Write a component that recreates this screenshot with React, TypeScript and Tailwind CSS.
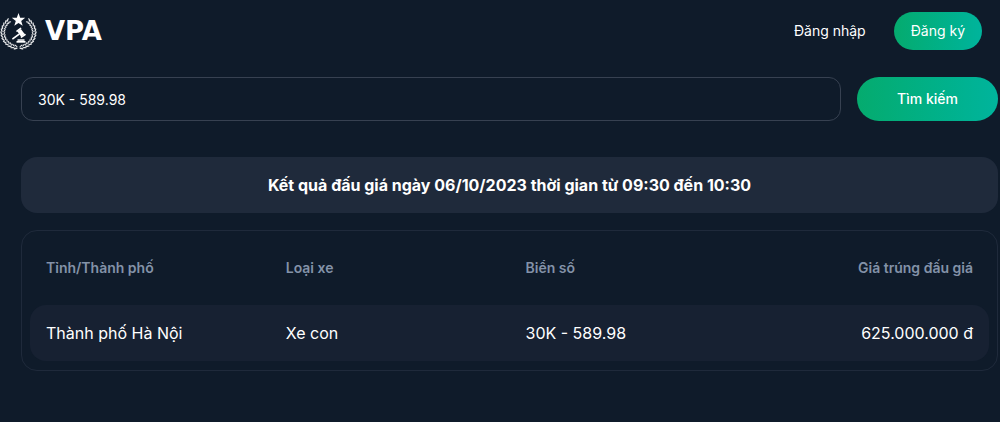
const leafAngles = [100, 111, 122, 133, 144, 155, 166, 177, 188, 199, 210, 221, 230];

function Wreath() {
  return (
    <g>
      {leafAngles.map((angle) => {
        const rad = (angle * Math.PI) / 180;
        const cos = Math.cos(rad);
        const sin = Math.sin(rad);
        return (
          <g key={angle}>
            <ellipse
              rx="2.2"
              ry="0.7"
              transform={`translate(${18.5 + 17 * cos} ${19.5 + 16.2 * sin}) rotate(${angle + 65})`}
            />
            <ellipse
              rx="1.9"
              ry="0.6"
              transform={`translate(${18.5 + 14.2 * cos} ${19.5 + 13.6 * sin}) rotate(${angle + 118})`}
            />
          </g>
        );
      })}
    </g>
  );
}

function Emblem() {
  return (
    <svg viewBox="0 0 37 37" className="size-[37px] shrink-0" fill="currentColor" aria-hidden="true">
      <path d="M18.500 0l1.700 4.800h5l-4 3.100 1.500 4.900-4.200-2.900-4.200 2.900 1.500-4.900-4-3.100h5z" />
      <g opacity="0.9">
        <Wreath />
        <g transform="translate(37 0) scale(-1 1)">
          <Wreath />
        </g>
      </g>
      <g transform="translate(21 19.800) rotate(-36)">
        <rect x="-2.200" y="-3.200" width="4.400" height="6.400" />
        <rect x="-2.900" y="-4.600" width="5.800" height="1.700" rx="0.6" />
        <rect x="-2.900" y="2.900" width="5.800" height="1.700" rx="0.6" />
        <rect x="-10.800" y="-0.900" width="9" height="1.800" rx="0.9" />
      </g>
      <rect x="17.500" y="26.300" width="7" height="1.500" />
      <rect x="16.500" y="28" width="9" height="1.700" />
    </svg>
  );
}

const columns = ["Tỉnh/Thành phố", "Loại xe", "Biển số", "Giá trúng đấu giá"];
const results = [["Thành phố Hà Nội", "Xe con", "30K - 589.98", "625.000.000 đ"]];

export default function App() {
  return (
    <div className="min-h-screen bg-[#0f1b2a] font-['Inter',sans-serif] text-white">
      <header className="flex items-center justify-between pt-3 pr-[18px]">
        <a href="#" className="flex items-center gap-2">
          <Emblem />
          <span className="font-['DejaVu_Sans',sans-serif] text-[26px] leading-none font-bold">VPA</span>
        </a>
        <nav className="flex items-center gap-7 text-sm">
          <a href="#">Đăng nhập</a>
          <button type="button" className="h-[38px] rounded-full bg-linear-to-r from-[#05ab6e] to-[#00b49c] px-[17px]">
            Đăng ký
          </button>
        </nav>
      </header>

      <main className="pt-[27px] pr-[2px] pb-8 pl-[21px]">
        <form className="flex items-center gap-4" onSubmit={(e) => e.preventDefault()}>
          <input
            type="text"
            aria-label="Biển số"
            defaultValue="30K - 589.98"
            className="h-[44px] min-w-0 flex-1 rounded-xl border border-[#374151] bg-transparent px-4 text-sm outline-none"
          />
          <button
            type="submit"
            className="h-[44px] w-[141px] rounded-full bg-linear-to-r from-[#05ab6e] to-[#00b49c] text-sm font-medium"
          >
            Tìm kiếm
          </button>
        </form>

        <h1 className="mt-9 flex min-h-14 items-center justify-center rounded-2xl bg-[#1f2a3b] px-4 text-center text-base font-bold">
          Kết quả đấu giá ngày 06/10/2023 thời gian từ 09:30 đến 10:30
        </h1>

        <section className="mt-[17px] rounded-2xl border border-[#1f2a3b] px-2">
          <table className="w-full table-fixed border-separate border-spacing-x-0 border-spacing-y-[9px]">
            <thead>
              <tr className="h-14 text-left text-sm text-[#8392a8]">
                {columns.map((c) => (
                  <th key={c} scope="col" className="px-4 font-semibold last:text-right">
                    {c}
                  </th>
                ))}
              </tr>
            </thead>
            <tbody>
              {results.map((row) => (
                <tr key={row[2]} className="h-14 text-base">
                  {row.map((cell) => (
                    <td key={cell} className="bg-[#172132] px-4 first:rounded-l-2xl last:rounded-r-2xl last:text-right">
                      {cell}
                    </td>
                  ))}
                </tr>
              ))}
            </tbody>
          </table>
        </section>
      </main>
    </div>
  );
}
